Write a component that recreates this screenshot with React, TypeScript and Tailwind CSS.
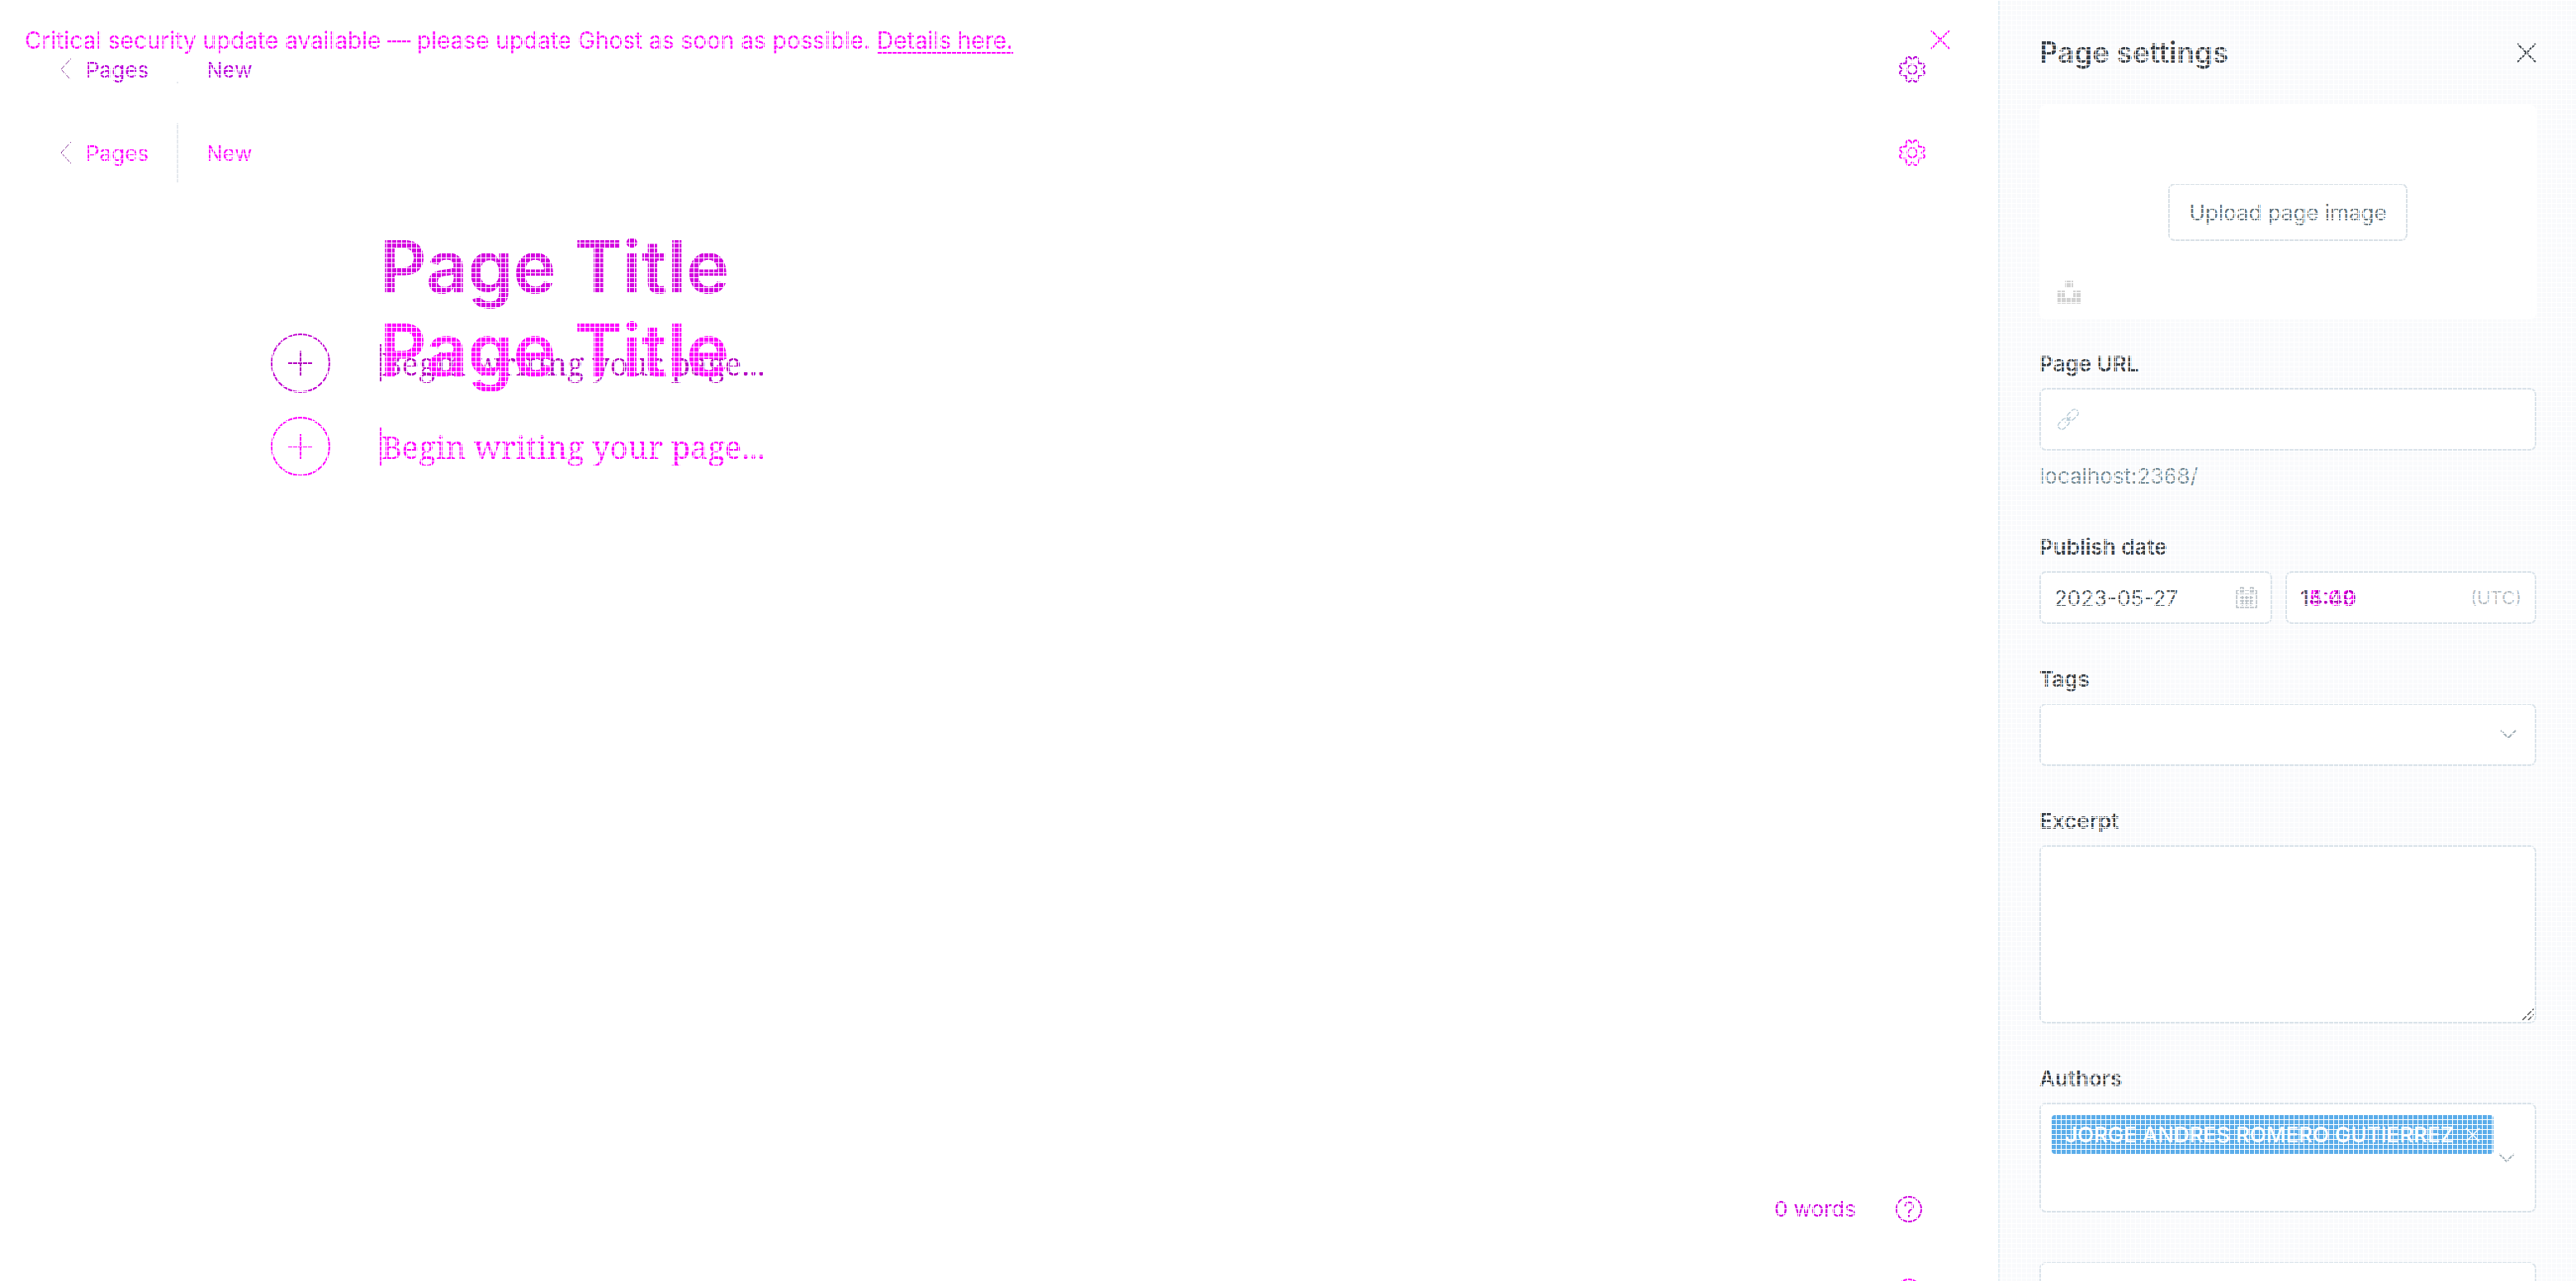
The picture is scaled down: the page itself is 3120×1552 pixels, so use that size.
import React from 'react';

function CloseIcon({ className }: { className: string }) {
  return (
    <svg viewBox="0 0 24 24" fill="none" stroke="currentColor" strokeWidth="2" className={className}>
      <path d="M1 1 23 23M23 1 1 23" />
    </svg>
  );
}

function GearIcon() {
  return (
    <svg viewBox="0 0 32 32" fill="none" stroke="currentColor" strokeWidth="2" strokeLinejoin="round" className="size-8">
      <circle cx="16" cy="16" r="5.8" />
      <path d="M16 4.500 13.700 2C12 .2 9 1.200 8.900 3.800L8.600 8.600 3.800 8.900C1.200 9 .2 12 2 13.700L4.500 16 2 18.300C.2 20 1.200 23 3.800 23.100L8.600 23.400 8.900 28.200C9 30.800 12 31.800 13.700 30L16 27.500 18.300 30C20 31.800 23 30.800 23.100 28.200L23.400 23.400 28.200 23.100C30.800 23 31.800 20 30 18.300L27.500 16 30 13.700C31.800 12 30.800 9 28.200 8.900L23.400 8.600 23.100 3.800C23 1.200 20 .2 18.300 2Z" />
    </svg>
  );
}

function HelpIcon() {
  return (
    <svg viewBox="0 0 32 32" fill="none" stroke="currentColor" strokeWidth="2" className="size-8">
      <circle cx="16" cy="16" r="15" />
      <path d="M11.500 12.500a4.700 4.700 0 1 1 6.700 4.200c-1.400.7-2.200 1.500-2.200 3v1" />
      <path d="M16 23v2.500" />
    </svg>
  );
}

function UnsplashIcon() {
  return (
    <svg viewBox="0 0 28 28" fill="#d2d2d2" className="size-7">
      <path d="M9 0h10v8H9zM0 12h9v8h10v-8h9v16H0z" />
    </svg>
  );
}

function LinkIcon() {
  return (
    <svg viewBox="0 0 26 26" fill="none" stroke="#b6cad6" strokeWidth="1.500" className="size-[26px]">
      <rect x="-7.500" y="-4.500" width="15" height="9" rx="4.500" transform="translate(18.500 7.500) rotate(-45)" />
      <rect x="-7.500" y="-4.500" width="15" height="9" rx="4.500" transform="translate(7.500 18.500) rotate(-45)" />
      <path d="m9 17 8-8" />
    </svg>
  );
}

function CalendarIcon() {
  return (
    <svg viewBox="0 0 26 26" fill="none" stroke="#b4bcc2" strokeWidth="1.500" className="size-[26px] shrink-0">
      <path d="M1 4h24v21H1zM1 9h24M5 13h16M5 17h16M5 21h16M8 11v12M13 11v12M18 11v12" />
      <path d="M5 1h4v5H5zM17 1h4v5h-4z" />
    </svg>
  );
}

function Chevron() {
  return (
    <svg viewBox="0 0 20 12" fill="none" stroke="#9fadb5" strokeWidth="2" className="h-3 w-5">
      <path d="m1 1 9 9 9-9" />
    </svg>
  );
}

function Toolbar({ color, settings, divider }: { color: string; settings: string; divider: string }) {
  return (
    <div className={"flex h-[72px] items-center pr-[88px] pl-[72px] text-[26px] " + color}>
      <button className="flex w-[142px] items-center gap-4">
        <svg viewBox="0 0 16 28" fill="none" stroke="#8a3d9c" strokeWidth="1" className="h-7 w-4">
          <path d="M14 1 2 14l12 13" />
        </svg>
        Pages
      </button>
      <div className={"w-0.5 " + divider} />
      <span className="pl-[34px]">New</span>
      <button aria-label={settings} className="ml-auto">
        <GearIcon />
      </button>
    </div>
  );
}

function Editor({ title, body, ring }: { title: string; body: string; ring: string }) {
  return (
    <div className="pl-[328px]">
      <h1 className={"pl-[132px] text-[88px] leading-[116px] font-semibold " + title}>Page Title</h1>
      <div className={"mt-[23px] flex items-center gap-[60px] " + body}>
        <button aria-label="Add a card" className={"flex size-[72px] shrink-0 items-center justify-center rounded-full border-2 " + ring}>
          <svg viewBox="0 0 30 30" fill="none" stroke="currentColor" strokeWidth="2" className="size-[30px]">
            <path d="M15 0v30M0 15h30" />
          </svg>
        </button>
        <p className="border-l-2 border-current font-['Noto_Serif','Liberation_Serif',serif] text-[38px] leading-[46px]">
          Begin writing your page...
        </p>
      </div>
    </div>
  );
}

function Field({ id, label, children }: { id: string; label: string; children: React.ReactNode }) {
  return (
    <div className="mt-[51px]">
      <label htmlFor={id} className="mb-[13px] block text-[26px] leading-8 font-semibold text-[#394047]">
        {label}
      </label>
      {children}
    </div>
  );
}

export default function App() {
  return (
    <div className="relative flex h-screen overflow-hidden bg-white font-[Inter,sans-serif]">
      <main className="relative min-w-0 flex-1 overflow-hidden">
        <div className="flex h-12 items-start justify-between pt-[31px] pr-[58px] pl-[30px] text-[#ff00ff]">
          <p className="text-[28px] leading-9 whitespace-nowrap">
            Critical security update available — please update Ghost as soon as possible.{" "}
            <a href="#details" className="underline decoration-2 underline-offset-4">Details here.</a>
          </p>
          <button aria-label="Dismiss notice" className="mt-[5px]">
            <CloseIcon className="size-6" />
          </button>
        </div>
        <Toolbar color="text-[#b800d8]" settings="Settings" divider="mt-[51px] h-0.5 self-start bg-[#e5e9ee]" />
        <div className="mt-[29px]">
          <Toolbar color="text-[#ff00ff]" settings="Page settings" divider="h-[72px] bg-[#e5e9ee]" />
        </div>
        <div className="mt-11">
          <Editor title="text-[#d400e0]" body="text-[#b300c0]" ring="border-[#c000d0]" />
        </div>
        <div className="absolute inset-x-0 top-[366px]">
          <Editor title="text-[#ff00ff]" body="text-[#ff00ff]" ring="border-[#ff00ff]" />
        </div>
        <footer className="absolute right-[92px] bottom-[68px] flex items-center gap-12 text-[26px] text-[#d000df]">
          <span>0 words</span>
          <button aria-label="Help"><HelpIcon /></button>
        </footer>
        <button aria-label="More help" className="absolute right-[92px] -bottom-[29px] text-[#ff00ff]">
          <HelpIcon />
        </button>
      </main>

      <aside className="w-[700px] shrink-0 overflow-hidden border-l-2 border-[#e5eff5] bg-[#f9fafc] px-12 text-[26px]">
        <header className="flex h-[127px] items-center justify-between">
          <h2 className="text-[35px] font-semibold text-[#394047]">Page settings</h2>
          <button aria-label="Close settings" className="text-[#394047]">
            <CloseIcon className="size-6" />
          </button>
        </header>

        <div className="relative flex h-[260px] items-center justify-center rounded-lg bg-white">
          <button className="h-[70px] w-[290px] rounded-lg border-2 border-[#d9e1e7] text-[#5f7179]">Upload page image</button>
          <button aria-label="Choose from Unsplash" className="absolute bottom-[19px] left-[22px]">
            <UnsplashIcon />
          </button>
        </div>

        <div className="-mt-[13px]">
          <Field id="url" label="Page URL">
            <div className="flex h-[76px] items-center gap-4 rounded-lg border-2 border-[#dae3ea] bg-white px-5">
              <LinkIcon />
              <input id="url" className="min-w-0 flex-1 outline-none" />
            </div>
            <p className="mt-[13px] mb-[52px] leading-9 text-[#738a94]">localhost:2368/</p>
          </Field>
        </div>

        <Field id="date" label="Publish date">
          <div className="flex gap-4">
            <div className="flex h-16 w-[282px] shrink-0 items-center rounded-lg border-2 border-[#dae3ea] bg-white px-4">
              <input id="date" defaultValue="2023-05-27" className="min-w-0 flex-1 text-[#4a555c] outline-none" />
              <CalendarIcon />
            </div>
            <div className="relative flex h-16 min-w-0 flex-1 items-center rounded-lg border-2 border-[#dae3ea] bg-white px-4">
              <input aria-label="Publish time" defaultValue="15:09" className="min-w-0 flex-1 text-[#ff00ff] outline-none" />
              <span className="pointer-events-none absolute left-4 text-[#a800b4]">
                <span className="text-[#4a555c]">1</span>4:40
              </span>
              <span className="text-[22px] text-[#b4bcc2]">(UTC)</span>
            </div>
          </div>
        </Field>

        <Field id="tags" label="Tags">
          <div className="relative">
            <select id="tags" className="block h-[76px] w-full appearance-none rounded-lg border-2 border-[#dae3ea] bg-white px-4">
              <option></option>
            </select>
            <div className="pointer-events-none absolute top-8 right-6">
              <Chevron />
            </div>
          </div>
        </Field>

        <Field id="excerpt" label="Excerpt">
          <div className="relative">
            <textarea id="excerpt" className="block h-[216px] w-full resize-none rounded-lg border-2 border-[#dae3ea] bg-white p-4" />
            <svg viewBox="0 0 14 14" fill="none" stroke="#555" strokeWidth="1.500" className="pointer-events-none absolute right-[3px] bottom-1 size-3.5">
              <path d="M0 14 14 0M7 14l7-7" />
            </svg>
          </div>
        </Field>

        <Field id="authors" label="Authors">
          <div className="relative flex h-[133px] items-start rounded-lg border-2 border-[#dae3ea] bg-white p-[13px]">
            <button id="authors" className="flex h-[47px] items-center gap-3.5 rounded bg-[#5badea] px-4 font-medium whitespace-nowrap text-white">
              JORGE ANDRES ROMERO GUTIERREZ
              <CloseIcon className="size-[18px]" />
            </button>
            <div className="pointer-events-none absolute top-[59px] right-6">
              <Chevron />
            </div>
          </div>
        </Field>

        <div className="mt-[60px] h-[76px] rounded-lg border-2 border-[#dae3ea] bg-white" />
      </aside>

      <div className="pointer-events-none absolute inset-0 z-50 bg-[linear-gradient(to_right,#fff_1px,transparent_1px),linear-gradient(to_bottom,#fff_1px,transparent_1px)] bg-[size:6px_6px]" />
    </div>
  );
}
